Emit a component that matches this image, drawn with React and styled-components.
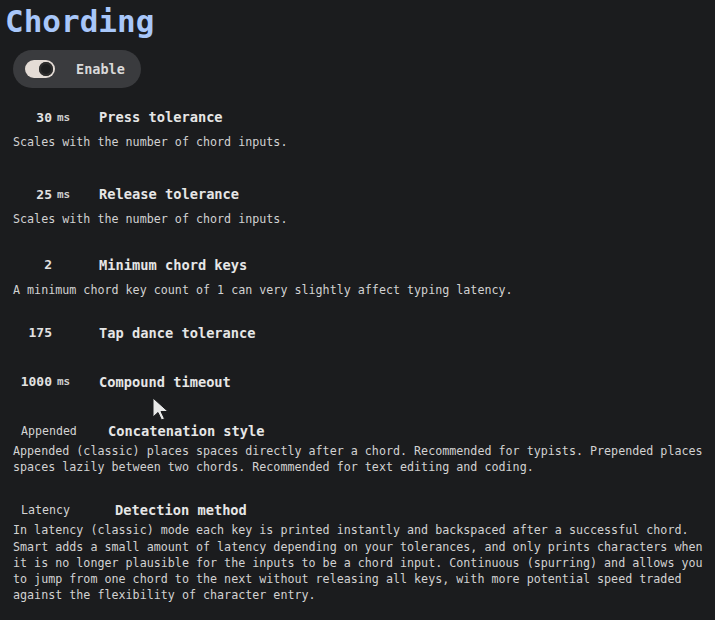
import styled, { createGlobalStyle } from "styled-components";

const GlobalStyle = createGlobalStyle`
  html, body {
    margin: 0;
    padding: 0;
    background: #1b1c1e;
  }
  body {
    font-family: "DejaVu Sans Mono", "Liberation Mono", monospace;
    color: #d6d6d6;
  }
`;

const Page = styled.div`
  position: relative;
  min-height: 620px;
  box-sizing: border-box;
  padding: 0 7px 0 13px;
  overflow: hidden;
`;

const Title = styled.h1`
  margin: 0 0 0 -8px;
  padding-top: 2px;
  font-size: 31px;
  line-height: 38px;
  font-weight: 700;
  color: #a8c7fa;
`;

const EnablePill = styled.label`
  margin-top: 10px;
  display: inline-flex;
  align-items: center;
  gap: 21px;
  width: 128px;
  height: 38px;
  box-sizing: border-box;
  padding-left: 12px;
  border-radius: 19px;
  background: #3a3b3e;
  font-size: 13.5px;
  font-weight: 600;
  color: #d9d9d9;
`;

const Track = styled.span`
  position: relative;
  width: 30px;
  height: 18px;
  border-radius: 9px;
  background: #e4dcd6;
`;

const Knob = styled.span`
  position: absolute;
  right: 2px;
  top: 2px;
  width: 14px;
  height: 14px;
  border-radius: 50%;
  background: #1e1f20;
  box-shadow: inset 0 0 0 2px #2e2e2e;
`;

const Setting = styled.div`
  margin-top: ${(p) => p.$top}px;
`;

const Row = styled.div`
  display: flex;
  align-items: center;
  height: ${(p) => (p.$select ? 24 : 34)}px;
`;

const NumberBox = styled.span`
  width: 39px;
  text-align: right;
  font-size: 13px;
  font-weight: 700;
  color: #e2e2e2;
`;

const Unit = styled.span`
  width: 42px;
  padding-left: 5px;
  font-size: 11px;
  font-weight: 600;
  color: #cfcfcf;
`;

const SelectBox = styled.span`
  width: ${(p) => p.$width}px;
  box-sizing: border-box;
  padding-left: 8px;
  font-size: 11.6px;
  color: #d4d4d4;
`;

const Label = styled.span`
  font-size: 13.7px;
  font-weight: 700;
  color: #e6e6e6;
`;

const Desc = styled.p`
  margin: 0;
  font-size: 11.7px;
  line-height: 16.25px;
  color: #d2d2d2;
`;

const Cursor = styled.svg`
  position: absolute;
  left: 151px;
  top: 396px;
`;

const settings = [
  { top: 12, value: "30", unit: "ms", label: "Press tolerance", desc: "Scales with the number of chord inputs." },
  { top: 27, value: "25", unit: "ms", label: "Release tolerance", desc: "Scales with the number of chord inputs." },
  {
    top: 20,
    value: "2",
    label: "Minimum chord keys",
    desc: "A minimum chord key count of 1 can very slightly affect typing latency.",
  },
  { top: 18, value: "175", label: "Tap dance tolerance" },
  { top: 15, value: "1000", unit: "ms", label: "Compound timeout" },
  {
    top: 20,
    select: "Appended",
    width: 95,
    label: "Concatenation style",
    desc: "Appended (classic) places spaces directly after a chord. Recommended for typists. Prepended places spaces lazily between two chords. Recommended for text editing and coding.",
  },
  {
    top: 23,
    select: "Latency",
    width: 102,
    label: "Detection method",
    desc: "In latency (classic) mode each key is printed instantly and backspaced after a successful chord. Smart adds a small amount of latency depending on your tolerances, and only prints characters when it is no longer plausible for the inputs to be a chord input. Continuous (spurring) and allows you to jump from one chord to the next without releasing all keys, with more potential speed traded against the flexibility of character entry.",
  },
];

export default function App() {
  return (
    <>
      <GlobalStyle />
      <Page>
        <Title>Chording</Title>
        <EnablePill>
          <Track>
            <Knob />
          </Track>
          Enable
        </EnablePill>
        {settings.map((s) => (
          <Setting key={s.label} $top={s.top}>
            <Row $select={!!s.select}>
              {s.select ? (
                <SelectBox $width={s.width}>{s.select}</SelectBox>
              ) : (
                <>
                  <NumberBox>{s.value}</NumberBox>
                  <Unit>{s.unit}</Unit>
                </>
              )}
              <Label>{s.label}</Label>
            </Row>
            {s.desc && <Desc>{s.desc}</Desc>}
          </Setting>
        ))}
        <Cursor width="20" height="27" viewBox="0 0 20 27">
          <path
            d="M2 2 L2 21 L7 16.5 L10.5 24 L13.5 22.7 L10 15.5 L17 15.5 Z"
            fill="#e8e8e8"
            stroke="#1b1c1e"
            strokeWidth="1"
            strokeLinejoin="round"
          />
        </Cursor>
      </Page>
    </>
  );
}
